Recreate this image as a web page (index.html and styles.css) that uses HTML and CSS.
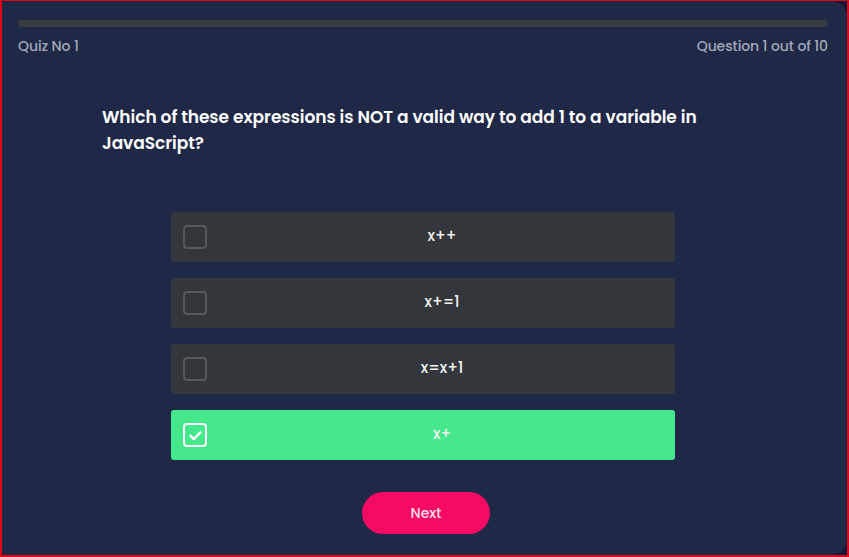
FILE: index.html
```html
<!DOCTYPE html>
<html lang="en">
<head>
<meta charset="utf-8">
<title>Quiz</title>
<link rel="stylesheet" href="styles.css">
</head>
<body>
<div class="frame">
  <div class="card">
    <div class="progress"><div class="progress-fill"></div></div>
    <div class="meta">
      <span>Quiz No 1</span>
      <span>Question 1 out of 10</span>
    </div>
    <h1 class="question">Which of these expressions is NOT a valid way to add 1 to a variable in JavaScript?</h1>
    <div class="options">
      <div class="option">
        <span class="box"></span>
        <span class="label">x++</span>
      </div>
      <div class="option">
        <span class="box"></span>
        <span class="label">x+=1</span>
      </div>
      <div class="option">
        <span class="box"></span>
        <span class="label">x=x+1</span>
      </div>
      <div class="option selected">
        <span class="box">
          <svg viewBox="0 0 24 24" width="17" height="17"><path d="M5 12.5l4.5 4.5L19 7.5" fill="none" stroke="#fff" stroke-width="3.4" stroke-linecap="round" stroke-linejoin="round"/></svg>
        </span>
        <span class="label">x+</span>
      </div>
    </div>
    <div class="actions">
      <button class="next">Next</button>
    </div>
  </div>
</div>
</body>
</html>
```

FILE: styles.css
```css
* { box-sizing: border-box; }
html, body { margin: 0; padding: 0; }
body {
  background: #121734;
  font-family: "Poppins", Inter, "Open Sans", sans-serif;
}
.frame {
  width: 849px;
  height: 557px;
  border: 2px solid #e0001b;
  border-top-width: 1px;
  background: #121734;
}
.card {
  height: 100%;
  background: #1f2846;
  border-radius: 3px 16px 16px 3px;
  padding: 19px 19px 0 16px;
}
.progress {
  height: 7px;
  border-radius: 4px;
  background: #383c41;
}
.progress-fill { width: 0; height: 100%; }
.meta {
  display: flex;
  justify-content: space-between;
  margin-top: 9px;
  font-size: 14px;
  line-height: 20px;
  font-weight: 500;
  color: #a3a9bb;
  letter-spacing: -0.1px;
}
.question {
  margin: 48px 0 0 84px;
  width: 645px;
  font-size: 17px;
  line-height: 26px;
  font-weight: 600;
  color: #ffffff;
  letter-spacing: -0.05px;
}
.options {
  margin: 56px 0 0 153px;
  width: 504px;
  display: flex;
  flex-direction: column;
  gap: 16px;
}
.option {
  height: 50px;
  display: flex;
  align-items: center;
  padding-left: 12px;
  background: #33363a;
  border-radius: 3px;
}
.box {
  width: 24px;
  height: 24px;
  border: 2px solid #55585d;
  border-radius: 4px;
  display: flex;
  align-items: center;
  justify-content: center;
  flex: none;
}
.label {
  flex: 1;
  text-align: center;
  color: #f2f2f2;
  font-size: 15px;
  font-weight: 500;
  padding: 0 0 4px 2px;
}
.option.selected { background: #45e98b; }
.option.selected .box { border-color: #ffffff; border-width: 2.5px; }
.actions {
  display: flex;
  justify-content: center;
  margin-top: 32px;
  padding-left: 6px;
}
.next {
  width: 128px;
  height: 42px;
  border: none;
  border-radius: 21px;
  background: #f50a64;
  color: #fbe0ec;
  font-family: inherit;
  font-size: 14px;
  font-weight: 500;
}
```
